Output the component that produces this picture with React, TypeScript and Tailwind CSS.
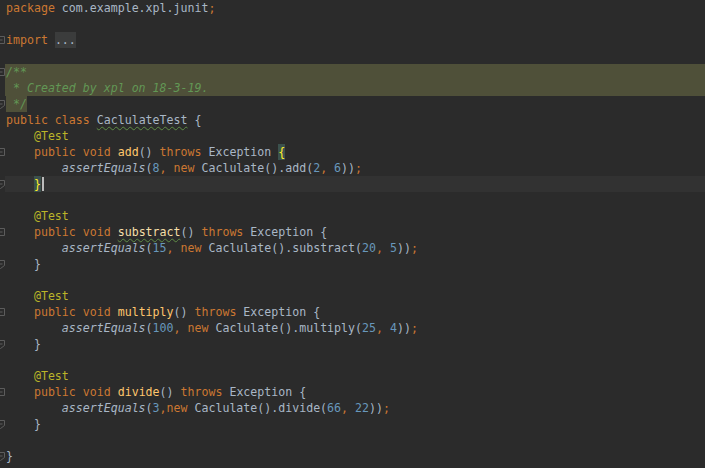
import React from 'react';

type Kind = 'kw' | 'tx' | 'num' | 'ann' | 'doc' | 'docbg' | 'fn' | 'st' | 'fold' | 'typo' | 'typofn' | 'brace';
type Tok = [Kind, string];

const squiggle = 'underline decoration-wavy decoration-[#5e8c45] underline-offset-[2px] decoration-[1px]';

const cls: Record<Kind, string> = {
  kw: 'text-[#cc7832]',
  tx: 'text-[#a9b7c6]',
  num: 'text-[#6897bb]',
  ann: 'text-[#bbb529]',
  doc: 'text-[#629755] italic',
  docbg: 'text-[#629755] italic bg-[#4f5039]',
  fn: 'text-[#ffc66d]',
  st: 'text-[#a9b7c6] italic',
  fold: 'text-[#a9b7c6] bg-[#3b3c3c]',
  typo: `text-[#a9b7c6] ${squiggle}`,
  typofn: `text-[#f5dfa8] ${squiggle}`,
  brace: 'text-[#ffef28] bg-[#3b514d]',
};

interface Line {
  toks: Tok[];
  fold?: 'open' | 'close';
  bg?: string;
  caret?: boolean;
}

const sp = (n: number): Tok => ['tx', ' '.repeat(n)];

const method = (name: string, typo: boolean, args: Tok[]): Line[] => [
  { toks: [sp(4), ['ann', '@Test']] },
  {
    fold: 'open',
    toks: [
      sp(4),
      ['kw', 'public void '],
      typo ? ['typofn', name] : ['fn', name],
      ['tx', '() '],
      ['kw', 'throws '],
      ['tx', 'Exception {'],
    ],
  },
  { toks: [sp(8), ['st', 'assertEquals'], ['tx', '('], ...args] },
  { fold: 'close', toks: [sp(4), ['tx', '}']] },
];

const lines: Line[] = [
  { toks: [['kw', 'package '], ['tx', 'com.example.xpl.junit'], ['kw', ';']] },
  { toks: [] },
  { fold: 'open', toks: [['kw', 'import '], ['fold', '...']] },
  { toks: [] },
  { fold: 'open', bg: 'bg-[#4f5039]', toks: [['doc', '/**']] },
  { bg: 'bg-[#4f5039]', toks: [['doc', ' * Created by xpl on 18-3-19.']] },
  { fold: 'close', toks: [['docbg', ' */']] },
  {
    toks: [['kw', 'public class '], ['typo', 'CaclulateTest'], ['tx', ' {']],
  },
  { toks: [sp(4), ['ann', '@Test']] },
  {
    fold: 'open',
    toks: [
      sp(4),
      ['kw', 'public void '],
      ['fn', 'add'],
      ['tx', '() '],
      ['kw', 'throws '],
      ['tx', 'Exception '],
      ['brace', '{'],
    ],
  },
  {
    toks: [
      sp(8),
      ['st', 'assertEquals'],
      ['tx', '('],
      ['num', '8'],
      ['kw', ', new '],
      ['tx', 'Caclulate().add('],
      ['num', '2'],
      ['kw', ', '],
      ['num', '6'],
      ['tx', '))'],
      ['kw', ';'],
    ],
  },
  { fold: 'close', bg: 'bg-[#323232]', caret: true, toks: [sp(4), ['brace', '}']] },
  { toks: [] },
  ...method('substract', true, [
    ['num', '15'],
    ['kw', ', new '],
    ['tx', 'Caclulate().substract('],
    ['num', '20'],
    ['kw', ', '],
    ['num', '5'],
    ['tx', '))'],
    ['kw', ';'],
  ]),
  { toks: [] },
  ...method('multiply', false, [
    ['num', '100'],
    ['kw', ', new '],
    ['tx', 'Caclulate().multiply('],
    ['num', '25'],
    ['kw', ', '],
    ['num', '4'],
    ['tx', '))'],
    ['kw', ';'],
  ]),
  { toks: [] },
  ...method('divide', false, [
    ['num', '3'],
    ['kw', ',new '],
    ['tx', 'Caclulate().divide('],
    ['num', '66'],
    ['kw', ', '],
    ['num', '22'],
    ['tx', '))'],
    ['kw', ';'],
  ]),
  { toks: [] },
  { fold: 'close', toks: [['tx', '}']] },
];

const FoldMark = ({ kind }: { kind: 'open' | 'close' }) => (
  <svg width="9" height="16" viewBox="0 0 9 16" className="ml-[-4px] shrink-0">
    {kind === 'open' ? (
      <path d="M0.5 4.5h8v7h-8z" fill="none" stroke="#5c5c5c" />
    ) : (
      <path d="M0.5 4.5h8v5l-4 3l-4-3z" fill="none" stroke="#5c5c5c" />
    )}
    <path d="M2.5 8h4" stroke="#5c5c5c" />
  </svg>
);

export default function App() {
  return (
    <div className="w-[705px] h-[468px] overflow-hidden bg-[#2b2b2b] font-['DejaVu_Sans_Mono',monospace] text-[11.6px]">
      {lines.map((ln, i) => (
        <div key={i} className="flex h-4 items-stretch">
          <div className="w-[5px] overflow-hidden flex shrink-0">
            {ln.fold && <FoldMark kind={ln.fold} />}
          </div>
          <div className={`flex-1 flex items-center pl-px whitespace-pre leading-4 ${ln.bg ?? ''}`}>
            {ln.toks.map(([k, t], j) => (
              <span key={j} className={cls[k]}>
                {t}
              </span>
            ))}
            {ln.caret && <span className="inline-block ml-px w-[2px] h-[14px] bg-[#bbbbbb]" />}
          </div>
        </div>
      ))}
    </div>
  );
}
